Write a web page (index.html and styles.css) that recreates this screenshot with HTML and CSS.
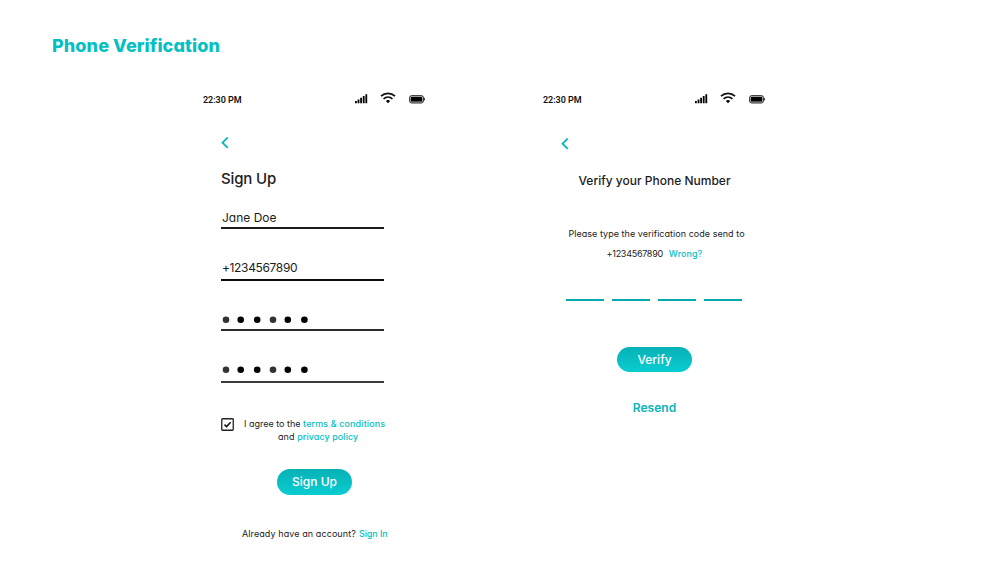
FILE: index.html
```html
<!DOCTYPE html>
<html lang="en">
<head>
<meta charset="utf-8">
<title>Phone Verification</title>
<link rel="stylesheet" href="styles.css">
</head>
<body>
<svg class="defs" width="0" height="0">
  <symbol id="signal" viewBox="0 0 13 10"><path d="M0 7h1.8v2.2H0zM2.6 5.6h1.8v3.6H2.6zM5.2 3.8H7v5.4H5.2zM7.8 2h1.8v7.2H7.8zM10.4.2h1.8v9h-1.8z"/></symbol>
  <symbol id="wifi" viewBox="0 0 16 12"><path d="M1 4.2C5 .3 11 .3 15 4.2M3.6 6.9c2.6-2.4 6.2-2.4 8.8 0" fill="none" stroke="#111" stroke-width="1.8"/><path d="M5.9 8.9c1.3-1.1 2.9-1.1 4.2 0L8 11.2z"/></symbol>
  <symbol id="battery" viewBox="0 0 17 9"><rect x=".6" y=".6" width="13.8" height="7.4" rx="2" fill="#aaa" stroke="#333"/><rect x="2" y="2" width="11" height="4.6" rx=".6"/><path d="M14.8 2.6c1.4.3 1.4 3.1 0 3.4z"/></symbol>
  <symbol id="chevron" viewBox="0 0 8 12"><path d="M6.7.5 1.5 5.7l5.2 5.2" fill="none" stroke="#06b9bd" stroke-width="1.8"/></symbol>
  <symbol id="password" viewBox="0 0 90 8"><g fill="#333"><circle cx="5" cy="3.7" r="3.3"/><circle cx="52" cy="3.7" r="3.3"/></g><circle cx="19.7" cy="3.7" r="3.3"/><circle cx="36.2" cy="3.7" r="3.3"/><circle cx="66.8" cy="3.7" r="3.3"/><circle cx="83.4" cy="3.7" r="3.3"/></symbol>
</svg>
<h1 class="page-title">Phone Verification</h1>
<main class="screens">
  <section class="screen">
    <div class="status"><span class="clock">22:30 PM</span><svg class="signal"><use href="#signal"/></svg><svg class="wifi"><use href="#wifi"/></svg><svg class="battery"><use href="#battery"/></svg></div>
    <svg class="back"><use href="#chevron"/></svg>
    <h2 class="heading">Sign Up</h2>
    <div class="field name"><span class="value">Jane Doe</span></div>
    <div class="field phone"><span class="value number">+1234567890</span></div>
    <div class="field secret"><svg class="dots"><use href="#password"/></svg></div>
    <div class="field secret confirm"><svg class="dots"><use href="#password"/></svg></div>
    <div class="agree">
      <svg class="check" viewBox="0 0 13 13"><rect x=".75" y=".75" width="11.5" height="11.5" rx=".8" fill="none" stroke="#222" stroke-width="1.3"/><path d="m3.5 6.6 2.1 2 4-4.3" fill="none" stroke="#111" stroke-width="1.5"/></svg>
      <div class="terms">
        <div>I agree to the <span class="link wide">terms &amp; conditions</span></div>
        <div class="second-line">and <span class="link">privacy policy</span></div>
      </div>
    </div>
    <div class="button signup">Sign Up</div>
    <div class="account"><span class="question">Already have an account?</span><span class="link signin">Sign In</span></div>
  </section>
  <section class="screen">
    <div class="status"><span class="clock">22:30 PM</span><svg class="signal"><use href="#signal"/></svg><svg class="wifi"><use href="#wifi"/></svg><svg class="battery"><use href="#battery"/></svg></div>
    <svg class="back lower"><use href="#chevron"/></svg>
    <h2 class="verify-title">Verify your Phone Number</h2>
    <div class="hint">Please type the verification code send to</div>
    <div class="target"><span class="sent-to">+1234567890</span><span class="link wrong">Wrong?</span></div>
    <div class="code"><i></i><i></i><i></i><i></i></div>
    <div class="button verify">Verify</div>
    <div class="resend">Resend</div>
  </section>
</main>
</body>
</html>
```
FILE: styles.css
```css
* { box-sizing: border-box; }
body { margin: 0; width: 1005px; height: 579px; overflow: hidden; background: #fff; color: #1c1c1c; font-family: Inter, "Open Sans", sans-serif; font-feature-settings: "cv11", "ss03"; }
svg { display: block; flex: none; }
.defs { position: absolute; }
.page-title { margin: 0; padding: 31px 0 0 52px; height: 90px; font-size: 18px; line-height: 30px; font-weight: 800; letter-spacing: 0.1px; color: #06bfc3; }
.screens { display: flex; gap: 116px; padding-left: 203px; }
.screen { width: 224px; display: flex; flex-direction: column; }
.status { display: flex; height: 20px; }
.clock { width: 152px; font: 600 9px/20px Roboto, sans-serif; letter-spacing: -0.05px; color: #111; }
.signal { width: 13px; height: 10px; margin-top: 4px; }
.wifi { width: 16px; height: 12px; margin: 2px 0 0 12px; }
.battery { width: 17px; height: 9px; margin: 5px 0 0 13px; }
.back { width: 8px; height: 12px; margin: 27px 0 0 18px; }
.lower { margin-top: 28px; }
.heading { margin: 15px 0 0 18px; font-size: 15px; line-height: 30px; font-weight: 500; letter-spacing: -0.15px; }
.field { width: 163px; margin-left: 18px; padding-left: 1px; border-bottom: 2px solid #1b1d20; }
.name { height: 35px; padding-top: 14px; }
.phone { height: 52px; padding-top: 29px; border-color: #0b0c0f; }
.value { display: block; font-size: 12px; line-height: 20px; }
.number { letter-spacing: -0.35px; }
.secret { height: 50px; padding: 35px 0 0; border-color: #2b2b2d; }
.confirm { height: 52px; border-color: #3b3b3d; }
.dots { width: 90px; height: 8px; }
.agree { display: flex; margin: 34px 0 0 18px; }
.check { width: 13px; height: 13px; margin-top: 1px; }
.terms { font-size: 9px; line-height: 13px; margin-left: 10px; white-space: nowrap; }
.second-line { padding-left: 34px; letter-spacing: 0.06px; }
.link { color: #06bfc3; font-weight: 500; }
.wide { letter-spacing: 0.1px; }
.button { width: 75px; height: 25px; border-radius: 13px; background: linear-gradient(#07b1b6, #09cdd1); color: #fff; font-size: 12px; font-weight: 500; line-height: 25px; text-align: center; }
.signup { height: 26px; line-height: 26px; margin: 26px 0 0 74px; }
.account { margin: 29px 0 0 39px; font-size: 9px; line-height: 20px; display: flex; gap: 3px; }
.question { letter-spacing: 0.09px; }
.signin { letter-spacing: -0.1px; }
.verify-title { margin: 16px 0 0; padding-right: 1px; text-align: center; font-size: 12px; line-height: 30px; font-weight: 500; }
.hint, .target { font-size: 9px; line-height: 20px; text-align: center; }
.hint { margin-top: 28px; padding-left: 3px; letter-spacing: 0.04px; }
.target { display: flex; justify-content: center; gap: 6px; padding-right: 1px; }
.sent-to { letter-spacing: -0.28px; }
.wrong { letter-spacing: 0.05px; }
.code { display: flex; gap: 8px; margin: 35px 0 0 23px; }
.code i { width: 38px; height: 2px; background: #05aaae; }
.verify { margin: 46px 0 0 74px; }
.resend { margin-top: 26px; padding-right: 1px; text-align: center; color: #06b5b9; font-size: 12px; font-weight: 600; line-height: 20px; }
```
